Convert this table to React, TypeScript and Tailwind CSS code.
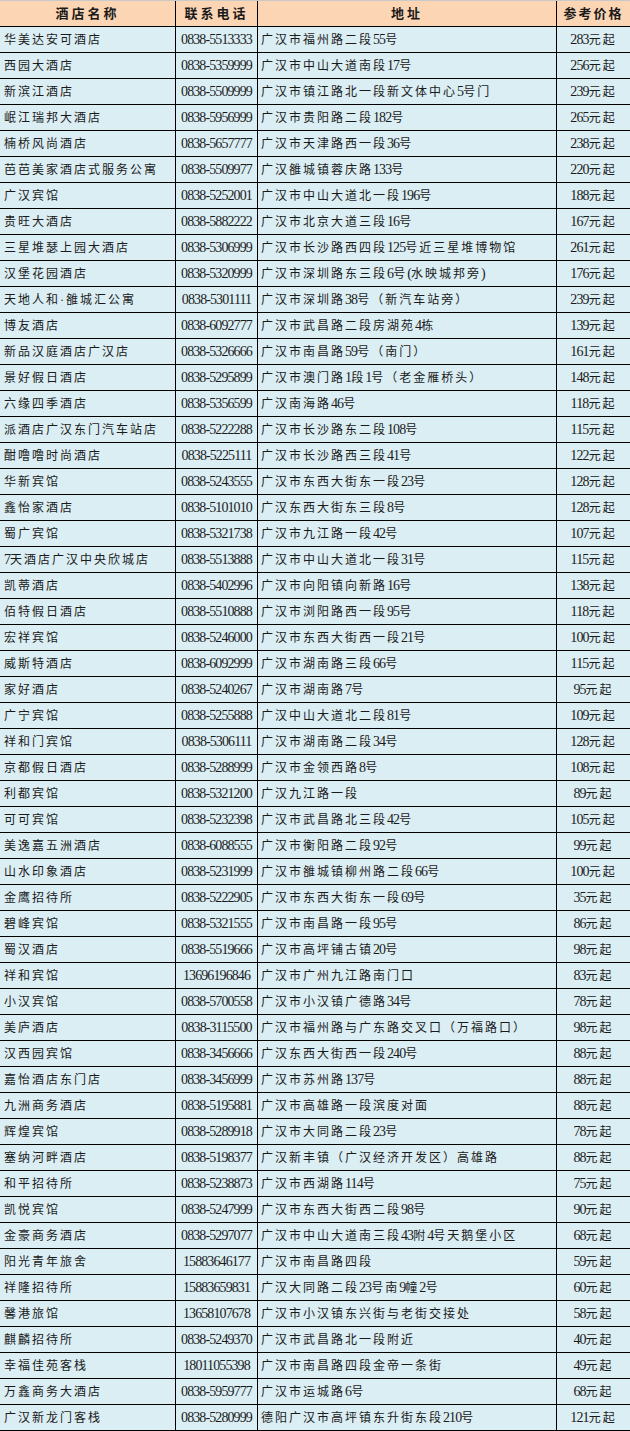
import React from 'react';

type Hotel = [string, string, string, string];

const hotels: Hotel[] = [
  ['华美达安可酒店', '0838-5513333', '广汉市福州路二段55号', '283元起'],
  ['西园大酒店', '0838-5359999', '广汉市中山大道南段17号', '256元起'],
  ['新滨江酒店', '0838-5509999', '广汉市镇江路北一段新文体中心5号门', '239元起'],
  ['岷江瑞邦大酒店', '0838-5956999', '广汉市贵阳路二段182号', '265元起'],
  ['楠桥风尚酒店', '0838-5657777', '广汉市天津路西一段36号', '238元起'],
  ['芭芭美家酒店式服务公寓', '0838-5509977', '广汉雒城镇蓉庆路133号', '220元起'],
  ['广汉宾馆', '0838-5252001', '广汉市中山大道北一段196号', '188元起'],
  ['贵旺大酒店', '0838-5882222', '广汉市北京大道三段16号', '167元起'],
  ['三星堆瑟上园大酒店', '0838-5306999', '广汉市长沙路西四段125号近三星堆博物馆', '261元起'],
  ['汉堡花园酒店', '0838-5320999', '广汉市深圳路东三段6号(水映城邦旁)', '176元起'],
  ['天地人和·雒城汇公寓', '0838-5301111', '广汉市深圳路38号（新汽车站旁）', '239元起'],
  ['博友酒店', '0838-6092777', '广汉市武昌路二段房湖苑4栋', '139元起'],
  ['新品汉庭酒店广汉店', '0838-5326666', '广汉市南昌路59号（南门）', '161元起'],
  ['景好假日酒店', '0838-5295899', '广汉市澳门路1段1号（老金雁桥头）', '148元起'],
  ['六缘四季酒店', '0838-5356599', '广汉南海路46号', '118元起'],
  ['派酒店广汉东门汽车站店', '0838-5222288', '广汉市长沙路东二段108号', '115元起'],
  ['酣噜噜时尚酒店', '0838-5225111', '广汉市长沙路西三段41号', '122元起'],
  ['华新宾馆', '0838-5243555', '广汉市东西大街东一段23号', '128元起'],
  ['鑫怡家酒店', '0838-5101010', '广汉东西大街东三段8号', '128元起'],
  ['蜀广宾馆', '0838-5321738', '广汉市九江路一段42号', '107元起'],
  ['7天酒店广汉中央欣城店', '0838-5513888', '广汉市中山大道北一段31号', '115元起'],
  ['凯蒂酒店', '0838-5402996', '广汉市向阳镇向新路16号', '138元起'],
  ['佰特假日酒店', '0838-5510888', '广汉市浏阳路西一段95号', '118元起'],
  ['宏祥宾馆', '0838-5246000', '广汉市东西大街西一段21号', '100元起'],
  ['威斯特酒店', '0838-6092999', '广汉市湖南路三段66号', '115元起'],
  ['家好酒店', '0838-5240267', '广汉市湖南路7号', '95元起'],
  ['广宁宾馆', '0838-5255888', '广汉中山大道北二段81号', '109元起'],
  ['祥和门宾馆', '0838-5306111', '广汉市湖南路二段34号', '128元起'],
  ['京都假日酒店', '0838-5288999', '广汉市金领西路8号', '108元起'],
  ['利都宾馆', '0838-5321200', '广汉九江路一段', '89元起'],
  ['可可宾馆', '0838-5232398', '广汉市武昌路北三段42号', '105元起'],
  ['美逸嘉五洲酒店', '0838-6088555', '广汉市衡阳路二段92号', '99元起'],
  ['山水印象酒店', '0838-5231999', '广汉市雒城镇柳州路二段66号', '100元起'],
  ['金鹰招待所', '0838-5222905', '广汉市东西大街东一段69号', '35元起'],
  ['碧峰宾馆', '0838-5321555', '广汉市南昌路一段95号', '86元起'],
  ['蜀汉酒店', '0838-5519666', '广汉市高坪铺古镇20号', '98元起'],
  ['祥和宾馆', '13696196846', '广汉市广州九江路南门口', '83元起'],
  ['小汉宾馆', '0838-5700558', '广汉市小汉镇广德路34号', '78元起'],
  ['美庐酒店', '0838-3115500', '广汉市福州路与广东路交叉口（万福路口）', '98元起'],
  ['汉西园宾馆', '0838-3456666', '广汉东西大街西一段240号', '88元起'],
  ['嘉怡酒店东门店', '0838-3456999', '广汉市苏州路137号', '88元起'],
  ['九洲商务酒店', '0838-5195881', '广汉市高雄路一段滨度对面', '88元起'],
  ['辉煌宾馆', '0838-5289918', '广汉市大同路二段23号', '78元起'],
  ['塞纳河畔酒店', '0838-5198377', '广汉新丰镇（广汉经济开发区）高雄路', '88元起'],
  ['和平招待所', '0838-5238873', '广汉市西湖路114号', '75元起'],
  ['凯悦宾馆', '0838-5247999', '广汉市东西大街西二段98号', '90元起'],
  ['金豪商务酒店', '0838-5297077', '广汉市中山大道南三段43附4号天鹅堡小区', '68元起'],
  ['阳光青年旅舍', '15883646177', '广汉市南昌路四段', '59元起'],
  ['祥隆招待所', '15883659831', '广汉大同路二段23号南9幢2号', '60元起'],
  ['馨港旅馆', '13658107678', '广汉市小汉镇东兴街与老街交接处', '58元起'],
  ['麒麟招待所', '0838-5249370', '广汉市武昌路北一段附近', '40元起'],
  ['幸福佳苑客栈', '18011055398', '广汉市南昌路四段金帝一条街', '49元起'],
  ['万鑫商务大酒店', '0838-5959777', '广汉市运城路6号', '68元起'],
  ['广汉新龙门客栈', '0838-5280999', '德阳广汉市高坪镇东升街东段210号', '121元起'],
];

// latin runs are set in a Times-like face, CJK runs get the wide spacing
const Mixed = ({ text }: { text: string }) => {
  const parts = text.split(/([0-9A-Za-z\-\.\(\)]+)/).filter(Boolean);
  return (
    <>
      {parts.map((p, i) =>
        /^[0-9A-Za-z\-\.\(\)]+$/.test(p) ? (
          <span key={i} className="text-[14px] tracking-[-0.9px]">{p}</span>
        ) : (
          <span key={i} className="text-[12px] tracking-[2px]">{p}</span>
        )
      )}
    </>
  );
};

const cell = 'h-[25px] flex items-center border-b border-black box-content whitespace-nowrap overflow-hidden';

export default function App() {
  return (
    <div
      className="w-[630px] bg-[#dbeef4] text-[#1a1a1a] leading-none"
      style={{ fontFamily: '"Liberation Serif", "Noto Sans CJK SC", serif' }}
    >
      <div className="grid grid-cols-[176px_82px_299px_73px] bg-[#fcd5b4] border-t border-[#c9c9c9] font-bold">
        <div className={`${cell} justify-center border-r text-[13px] tracking-[3px]`}>酒店名称</div>
        <div className={`${cell} justify-center border-r text-[13px] tracking-[3px]`}>联系电话</div>
        <div className={`${cell} justify-center border-r text-[13px] tracking-[3px]`}>地址</div>
        <div className={`${cell} justify-center text-[13px] tracking-[2px]`}>参考价格</div>
      </div>
      {hotels.map(([name, tel, addr, price]) => (
        <div key={name} className="grid grid-cols-[176px_82px_299px_73px]">
          <div className={`${cell} border-r pl-[4px]`}>
            <Mixed text={name} />
          </div>
          <div className={`${cell} border-r justify-center`}>
            <span className="text-[14px] tracking-[-0.9px]">{tel}</span>
          </div>
          <div className={`${cell} border-r pl-[3px]`}>
            <Mixed text={addr} />
          </div>
          <div className={`${cell} justify-center`}>
            <Mixed text={price} />
          </div>
        </div>
      ))}
    </div>
  );
}
